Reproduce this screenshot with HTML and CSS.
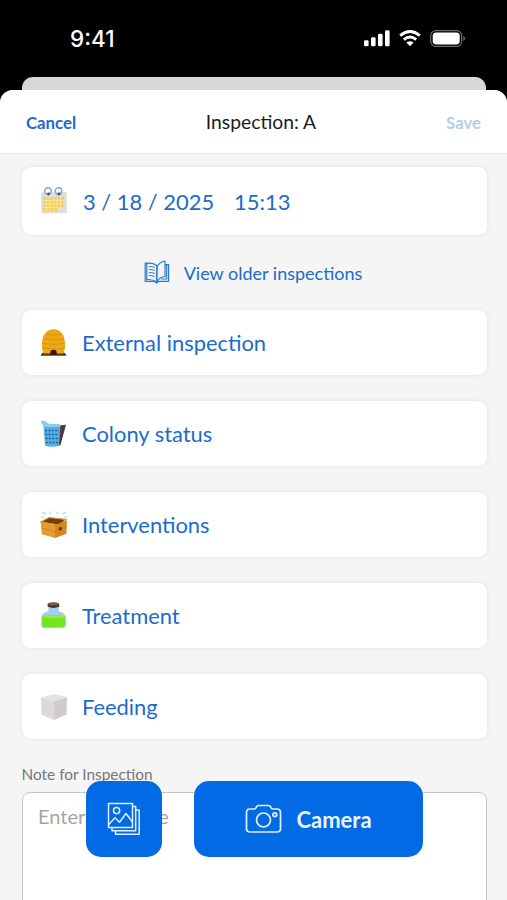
FILE: index.html
```html
<!DOCTYPE html>
<html lang="en">
<head>
    <meta charset="UTF-8">
    <meta name="viewport" content="width=device-width, initial-scale=1.0">
    <title>Inspection: A</title>
    <link rel="stylesheet" href="styles.css">
</head>
<body>
    <div id="status-bar">
        <span class="clock">9:41</span>
        <div class="status-icons">
            <svg width="26" height="17" viewBox="0 0 26 17" fill="#fff">
                <rect x="0" y="10.3" width="4.6" height="6" rx="1.3"/>
                <rect x="7" y="7.3" width="4.6" height="9" rx="1.3"/>
                <rect x="14" y="3.8" width="4.6" height="12.5" rx="1.3"/>
                <rect x="21" y="0.3" width="4.6" height="16" rx="1.3"/>
            </svg>
            <svg width="22" height="17" viewBox="0 0 22 17" fill="none" stroke="#fff" stroke-width="2.9">
                <path d="M1.2 5.6Q11 -2.4 20.8 5.6"/>
                <path d="M4.8 9.6Q11 4.6 17.2 9.6"/>
                <path d="M11 16.2L7.4 12.6Q11 9.8 14.6 12.6Z" fill="#fff" stroke="none"/>
            </svg>
            <svg width="36" height="17" viewBox="0 0 36 17">
                <rect x="0.7" y="0.7" width="31" height="15.6" rx="5" fill="none" stroke="#6b6b6b" stroke-width="1.2"/>
                <rect x="2.7" y="2.6" width="27" height="11.8" rx="3.4" fill="#fff"/>
                <path d="M33.3 6v5q1.9-.8 1.9-2.5T33.3 6z" fill="#6b6b6b"/>
            </svg>
        </div>
    </div>
    <div class="back-sheet"></div>
    <div id="sheet">
        <div id="header">
            <span class="cancel">Cancel</span>
            <span class="title">Inspection: A</span>
            <span class="save">Save</span>
        </div>
        <div id="content">
            <div class="card date-card">
                <svg class="icon" viewBox="0 0 28 28">
                    <path d="M1 5.5L26.5 5L27 26L1.5 26.5z" fill="#e3dcd8"/>
                    <path d="M3 10h21v10h-7v4.5H3z" fill="#f3cf55"/>
                    <path d="M3 13.4h21M3 17h21M3 20.6h14M6.5 10v14.5M10 10v14.5M13.5 10v14.5M17 10v10M20.5 10v10" stroke="#fbecb5" stroke-width=".8"/>
                    <g fill="none" stroke="#79a9d8" stroke-width="1.4">
                        <circle cx="8" cy="4" r="3.3"/>
                        <circle cx="18.5" cy="4" r="3.3"/>
                    </g>
                    <circle cx="8.6" cy="7" r="1.4" fill="#43586b"/>
                    <circle cx="19" cy="7" r="1.4" fill="#43586b"/>
                </svg>
                <span class="date">3 / 18 / 2025</span>
                <span class="time">15:13</span>
            </div>
            <div class="older">
                <svg width="26" height="25" viewBox="0 0 26 25" fill="none" stroke="#2f78ce" stroke-width="1.2" stroke-linejoin="round">
                    <path d="M12.8 5.4Q8.5 2.6 2.8 3.2V19.6Q8.5 19 12.8 22Z"/>
                    <path d="M12.8 22V7.5Q15 2 21 1V16.5Q15.5 17 12.8 22Z"/>
                    <path d="M2.8 3.2H1.2V21.4H10.6Q12.8 24.4 15 21.4H24.6V4.6H21M22.7 4.6V19H17"/>
                    <path d="M4.8 6.6Q8 6.4 10.8 7.4M4.8 9.6Q8 9.4 10.8 10.4M4.8 12.6Q8 12.4 10.8 13.4M4.8 15.6Q8 15.4 10.8 16.4" stroke-width="1"/>
                </svg>
                <span>View older inspections</span>
            </div>
            <div class="card">
                <svg class="icon" viewBox="0 0 28 28">
                    <path d="M3 23.5h21q2.5 1.2 2.3 3.2H.8q-.2-2 2.2-3.2z" fill="#5e3312"/>
                    <path d="M8.5 1.5Q13.5-.8 18.5 1.5Q21.2 2.4 22 5Q24.3 6.5 24 9.5Q25.4 11.5 24.7 14Q25.6 16.5 24.7 19Q25 22 23 24.5H4Q2 22 2.3 19Q1.4 16.5 2.3 14Q1.6 11.5 3 9.5Q2.7 6.5 5 5Q5.8 2.4 8.5 1.5z" fill="#eda914"/>
                    <path d="M5 5.2q8.5 2 17 0M3 9.8q10.5 2.2 21 0M2.3 14.4q11.2 2.3 22.4 0M2.3 19q11.2 2.3 22.4 0" fill="none" stroke="#d6940f" stroke-width="1"/>
                    <path d="M10.3 25.5v-1.7q0-3 3.2-3t3.2 3v1.7z" fill="#2b1709"/>
                </svg>
                <span>External inspection</span>
            </div>
            <div class="card">
                <svg class="icon" viewBox="0 0 28 28">
                    <path d="M17.5 5.5L26 4.8L20.5 25L17 26z" fill="#493c3b"/>
                    <path d="M1 1.8L4.5 .7L8 3.8L20.5 4.8L19 25.4Q12 28.3 5 25.4L3.6 6z" fill="#56ade3"/>
                    <path d="M1 1.8L4.5 .7L8 3.8L20.5 4.8L20.3 7L3.7 7z" fill="#8acdf3"/>
                    <path d="M5 10.5h14M5.2 14.5h13.7M5.5 18.5h13.2M5.8 22.5h12.5" stroke="#1d629d" stroke-width="1.7" stroke-dasharray="2 1.4"/>
                </svg>
                <span>Colony status</span>
            </div>
            <div class="card">
                <svg class="icon" viewBox="0 0 28 28">
                    <path d="M2 1l4 2M9 .5l2 2.5M18.5.5l-2 2.5M26 1l-4 2M1 6h3M24 6h3" stroke="#a8d3e6" stroke-width="1.1"/>
                    <path d="M1 11L9 6.5L26 8.5L19 14z" fill="#70400f"/>
                    <path d="M1 11L9 6.5L26 8.5L19 14z" fill="none" stroke="#db9436" stroke-width="1.2"/>
                    <path d="M.8 11L15 14V27L1.8 23.2z" fill="#e69b32"/>
                    <path d="M15 14L27 9.5L26.4 22.8L15 27z" fill="#d78421"/>
                    <path d="M1.3 17L15 20.5L26.7 16" fill="none" stroke="#c27a20" stroke-width=".7"/>
                    <circle cx="20.3" cy="17.7" r="1.7" fill="#62360d"/>
                </svg>
                <span>Interventions</span>
            </div>
            <div class="card">
                <svg class="icon" viewBox="0 0 28 28">
                    <path d="M8.5 4h10.2v5.3Q25.8 11 26 15.5V23q0 3.2-4 3.2H5.2q-4 0-4-3.2v-7.5Q1.5 11 8.5 9.3z" fill="#9fd1ee"/>
                    <path d="M2.3 14.5Q13.5 12.2 24.9 14.5V22.5q0 2.5-3.5 2.5H5.8q-3.5 0-3.5-2.5z" fill="#73e51c"/>
                    <ellipse cx="13.6" cy="14.8" rx="11" ry="1.6" fill="#95ea48"/>
                    <path d="M7.7 1.7Q13.5-.8 19.2 1.7V4.8Q13.5 7 7.7 4.8z" fill="#493129"/>
                    <ellipse cx="13.4" cy="2" rx="5.7" ry="1.6" fill="#79554b"/>
                </svg>
                <span>Treatment</span>
            </div>
            <div class="card">
                <svg class="icon" viewBox="0 0 28 28">
                    <path d="M1 4.5L15 .8L27 4L14 8.5z" fill="#e6e4e3"/>
                    <path d="M1 4.5L14 8.5V27L1.5 21.8z" fill="#dcdad8"/>
                    <path d="M14 8.5L27 4L26.5 21.5L14 27z" fill="#cfccca"/>
                </svg>
                <span>Feeding</span>
            </div>
            <div class="note-label">Note for Inspection</div>
            <div class="note-box">Enter text here</div>
        </div>
    </div>
    <div id="actions">
        <div class="btn gallery">
            <svg width="34" height="34" viewBox="0 0 34 34" fill="none" stroke="#e3f0ff" stroke-width="1.5" stroke-linejoin="round">
                <rect x="1.5" y="1.5" width="24" height="24"/>
                <circle cx="9.6" cy="8.6" r="3.1"/>
                <path d="M1.8 22.5L8 15.8L12.5 20.2L19 11.5L25.5 20"/>
                <path d="M25.5 4.5H28.7V28.7H5V25.5M28.7 8H32.2V32.2H8.5V28.7"/>
            </svg>
        </div>
        <div class="btn camera">
            <svg width="37" height="30" viewBox="0 0 37 30" fill="none" stroke="#e3f0ff" stroke-width="1.7" stroke-linejoin="round">
                <path d="M5 5H9.2Q10.6 5 11.2 3.5L11.5 2.7Q12 1.5 13.5 1.5H23.5Q25 1.5 25.5 2.7L25.8 3.5Q26.4 5 27.8 5H32Q35.5 5 35.5 8.5V24.5Q35.5 28 32 28H5Q1.5 28 1.5 24.5V8.5Q1.5 5 5 5Z"/>
                <circle cx="18.5" cy="16" r="7"/>
                <circle cx="29.8" cy="10.8" r="1.9"/>
            </svg>
            <span>Camera</span>
        </div>
    </div>
</body>
</html>
```
FILE: styles.css
```css
body {
    margin: 0;
    height: 900px;
    overflow: hidden;
    background-color: #000;
    font-family: Lato, Carlito, sans-serif;
    color: #1b6ccb;
}
svg {
    display: block;
    flex-shrink: 0;
}
#status-bar {
    height: 77px;
    box-sizing: border-box;
    padding: 0 41px 0 70px;
    display: flex;
    justify-content: space-between;
    align-items: center;
}
.clock {
    padding-bottom: 1px;
    font-family: Inter, sans-serif;
    font-size: 22.5px;
    font-weight: 500;
    color: #fff;
}
.status-icons {
    display: flex;
    gap: 9px;
}
.back-sheet {
    height: 13px;
    margin: 0 21px 0 22px;
    border-radius: 11px 11px 0 0;
    background-color: #d8d8d8;
}
#sheet {
    height: 810px;
    overflow: hidden;
    border-radius: 13px 13px 0 0;
    background-color: #f5f5f5;
}
#header {
    height: 64px;
    box-sizing: border-box;
    padding: 2px 26px 0;
    display: grid;
    grid-template-columns: 1fr auto 1fr;
    align-items: center;
    background-color: #fff;
    border-bottom: 1px solid #e9e9e9;
    font-size: 16.8px;
    font-weight: bold;
}
.title {
    padding: 0 0 2px 15px;
    font-size: 19.3px;
    font-weight: normal;
    color: #1c1c1e;
}
.save {
    text-align: right;
    color: #b5cdec;
}
#content {
    padding: 13px 20.5px 0 21.5px;
}
.card {
    height: 65px;
    box-sizing: border-box;
    margin-bottom: 26px;
    padding-left: 18.5px;
    display: flex;
    align-items: center;
    gap: 14px;
    background-color: #fff;
    border-radius: 9px;
    box-shadow: 0 0 5px rgba(0, 0, 0, 0.08);
    font-size: 21.9px;
}
.icon {
    width: 28px;
    height: 28px;
}
.date-card {
    height: 68px;
    margin-bottom: 0;
}
.date {
    margin-left: 1px;
}
.time {
    margin-left: 6px;
}
.older {
    height: 75px;
    padding-right: 2px;
    display: flex;
    justify-content: center;
    align-items: center;
    gap: 14px;
    font-size: 18px;
}
.note-label {
    height: 27px;
    line-height: 19px;
    font-size: 15.4px;
    color: #777;
}
.note-box {
    height: 150px;
    padding: 11px 15.5px;
    background-color: #fff;
    border: 1px solid #c6c6c6;
    border-radius: 8px;
    font-size: 20px;
    color: #a5a5a5;
}
/* floating buttons over the note field */
#actions {
    position: absolute;
    left: 86px;
    bottom: 43px;
    display: flex;
    gap: 32px;
}
.btn {
    height: 76px;
    display: flex;
    justify-content: center;
    align-items: center;
    gap: 14px;
    background-color: #036ae6;
    border-radius: 15px;
    font-size: 22px;
    font-weight: bold;
    color: #eaf4ff;
}
.gallery {
    width: 76px;
}
.camera {
    width: 229px;
}
```
